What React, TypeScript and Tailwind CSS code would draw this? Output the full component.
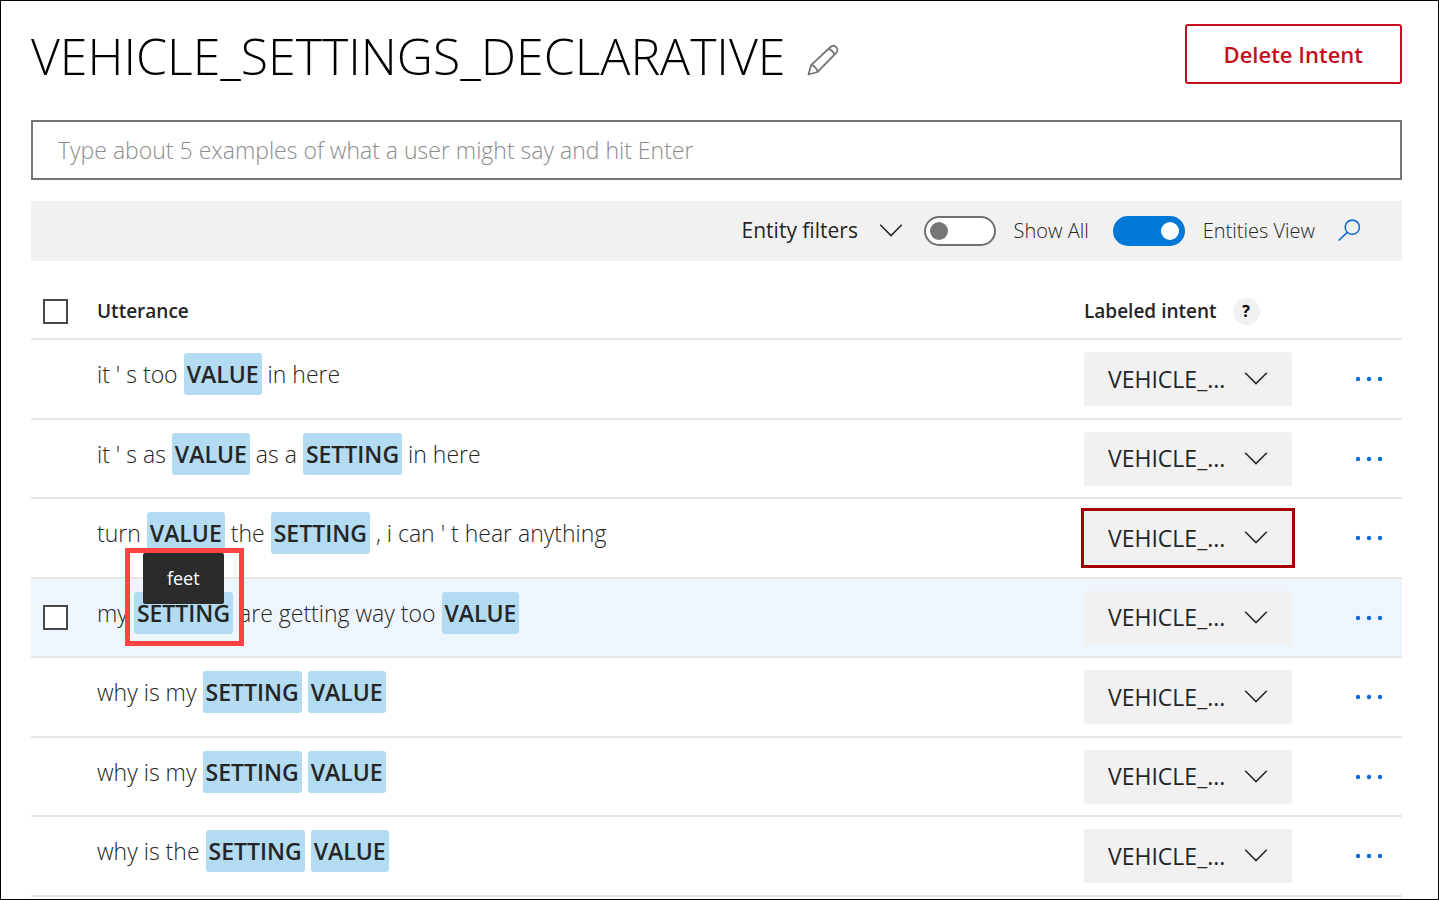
import type { ReactNode } from "react";

type Token = { text: string; entity?: boolean; tooltip?: string };
type Row = { tokens: Token[]; active?: boolean; flagged?: boolean };

const t = (text: string): Token => ({ text });
const e = (text: string, tooltip?: string): Token => ({ text, entity: true, tooltip });

const rows: Row[] = [
  { tokens: [t("it ' s too"), e("VALUE"), t("in here")] },
  { tokens: [t("it ' s as"), e("VALUE"), t("as a"), e("SETTING"), t("in here")] },
  { tokens: [t("turn"), e("VALUE"), t("the"), e("SETTING"), t(", i can ' t hear anything")], flagged: true },
  { tokens: [t("my"), e("SETTING", "feet"), t("are getting way too"), e("VALUE")], active: true },
  { tokens: [t("why is my"), e("SETTING"), e("VALUE")] },
  { tokens: [t("why is my"), e("SETTING"), e("VALUE")] },
  { tokens: [t("why is the"), e("SETTING"), e("VALUE")] },
];

function Chevron({ className }: { className: string }) {
  return (
    <svg viewBox="0 0 24 14" fill="none" stroke="#252525" strokeWidth="1.5" className={`h-[14px] w-6 ${className}`} aria-hidden="true">
      <path d="M1.200 .8 12 11.600 22.800 .8" />
    </svg>
  );
}

function Pencil() {
  return (
    <svg viewBox="0 0 32 32" fill="none" stroke="#767676" strokeWidth="1.8" strokeLinejoin="round" className="h-8 w-8" aria-hidden="true">
      <path d="M1.500 30.500 4 21.200 23.500 3C27.400-.4 33 5 29.200 8.800L10.500 28Z" />
      <path d="M4 21.200C7 21.200 10.300 24.500 10.500 28M21.500 5C24 5.500 26.800 8 27.200 10.400" />
    </svg>
  );
}

function Search() {
  return (
    <svg viewBox="0 0 24 24" fill="none" stroke="#0a6cdb" strokeWidth="1.6" className="h-6 w-6" aria-hidden="true">
      <circle cx="15.300" cy="8.200" r="7.100" />
      <path d="M10.300 13.300 1.600 21.500" />
    </svg>
  );
}

function Checkbox({ label }: { label: string }) {
  return (
    <input
      type="checkbox"
      aria-label={label}
      className="ml-3 block h-[25px] w-[25px] appearance-none border-2 border-[#484848] bg-white checked:bg-[#0078d7]"
    />
  );
}

function Toggle({ label, on }: { label: string; on?: boolean }) {
  return (
    <label className="flex items-center gap-[18px] text-xl font-light text-[#252525]">
      <span className="grid items-center">
        <input
          type="checkbox"
          role="switch"
          defaultChecked={on}
          className="peer col-start-1 row-start-1 h-[30px] w-[72px] appearance-none rounded-full border-2 border-[#707070] bg-white checked:border-[#0078d7] checked:bg-[#0078d7]"
        />
        <span className="pointer-events-none col-start-1 row-start-1 ml-[6px] h-[18px] w-[18px] rounded-full bg-[#767676] peer-checked:ml-12 peer-checked:bg-white" />
      </span>
      <span>{label}</span>
    </label>
  );
}

function Entity({ children, tooltip }: { children: ReactNode; tooltip?: string }) {
  return (
    <span className="relative rounded-[3px] bg-[#b3dbf2] px-[3px] font-semibold leading-[42px] text-[#252525]">
      {children}
      {tooltip && (
        <>
          <span role="tooltip" className="absolute bottom-[30px] left-[9px] z-20 rounded-[2px] bg-[#2b2b2b] px-6 text-lg font-normal leading-[51px] text-white">
            {tooltip}
          </span>
          <span className="absolute -bottom-3 -left-[9px] -right-[11px] -top-11 z-10 border-5 border-[#ff4343]" />
        </>
      )}
    </span>
  );
}

export default function App() {
  return (
    <main className="min-h-screen border border-black bg-white pl-[30px] pr-9 pt-[23px] font-['Open_Sans','Noto_Sans',sans-serif] text-[#252525]">
      <header className="flex items-start justify-between">
        <div className="flex items-center gap-[22px]">
          <h1 className="text-[50px] font-light leading-[64px] text-black">VEHICLE_SETTINGS_DECLARATIVE</h1>
          <button type="button" aria-label="Rename intent" className="pt-2">
            <Pencil />
          </button>
        </div>
        <button type="button" className="h-[60px] rounded-[3px] border-2 border-[#c50f1f] px-[37px] text-[22px] font-semibold text-[#c50f1f]">
          Delete Intent
        </button>
      </header>

      <input
        type="text"
        aria-label="New utterance"
        placeholder="Type about 5 examples of what a user might say and hit Enter"
        className="mt-8 block h-[60px] w-full border-2 border-[#767676] px-[25px] text-[23px] font-light placeholder:text-[#8c8c8c]"
      />

      <div className="mt-[21px] flex h-[60px] items-center justify-end bg-[#f1f1f1] pr-[41px]">
        <span className="mr-[21px] grid items-center">
          <select aria-label="Entity filters" className="col-start-1 row-start-1 appearance-none pr-11 text-[21px]">
            <option>Entity filters</option>
          </select>
          <Chevron className="pointer-events-none col-start-1 row-start-1 justify-self-end" />
        </span>
        <Toggle label="Show All" />
        <span className="w-6" />
        <Toggle label="Entities View" on />
        <button type="button" aria-label="Search utterances" className="ml-[22px]">
          <Search />
        </button>
      </div>

      <table className="mt-[23px] w-full border-collapse text-left">
        <thead>
          <tr className="h-[55px] border-b-2 border-[#e6e6e6]">
            <th className="w-[66px] p-0">
              <Checkbox label="Select all utterances" />
            </th>
            <th className="p-0 text-[19px] font-semibold">Utterance</th>
            <th className="w-[271px] p-0 text-[19px] font-semibold">
              <div className="flex items-center gap-4">
                Labeled intent
                <button type="button" aria-label="About labeled intent" className="h-[27px] w-[27px] rounded-full bg-[#f1f1f1] text-base font-bold text-black">
                  ?
                </button>
              </div>
            </th>
            <th className="w-[47px] p-0" aria-label="Actions" />
          </tr>
        </thead>
        <tbody>
          {rows.map((row, i) => (
            <tr key={i} className={`h-20 border-b-2 border-[#e6e6e6] even:h-[79px] ${row.active ? "bg-[#eff5fd]" : ""}`}>
              <td className="p-0">{row.active && <Checkbox label="Select utterance" />}</td>
              <td className="p-0 pb-[10px] text-[23px] font-light">
                <div className="flex items-baseline gap-[6px] whitespace-nowrap">
                  {row.tokens.map((token, j) =>
                    token.entity ? (
                      <Entity key={j} tooltip={token.tooltip}>
                        {token.text}
                      </Entity>
                    ) : (
                      <span key={j}>{token.text}</span>
                    ),
                  )}
                </div>
              </td>
              <td className="p-0">
                <span className="grid w-52 items-center">
                  <select
                    aria-label="Labeled intent"
                    className={`col-start-1 row-start-1 h-[54px] w-full appearance-none bg-[#f1f1f1] pl-6 pr-12 text-[23px] ${row.flagged ? "ring-3 ring-[#a80000]" : "rounded-[2px]"}`}
                  >
                    <option>VEHICLE_...</option>
                  </select>
                  <Chevron className="pointer-events-none col-start-1 row-start-1 mr-6 justify-self-end" />
                </span>
              </td>
              <td className="p-0">
                <button type="button" aria-label="More actions" className="block">
                  <svg viewBox="0 0 28 6" fill="#0a6cdb" className="h-[6px] w-7" aria-hidden="true">
                    <circle cx="3" cy="3" r="2.200" />
                    <circle cx="14" cy="3" r="2.200" />
                    <circle cx="25" cy="3" r="2.200" />
                  </svg>
                </button>
              </td>
            </tr>
          ))}
        </tbody>
      </table>
    </main>
  );
}
